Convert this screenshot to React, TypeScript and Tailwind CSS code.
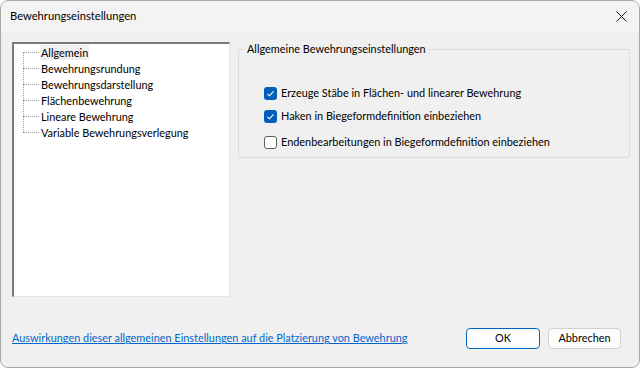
const items = [
  'Allgemein',
  'Bewehrungsrundung',
  'Bewehrungsdarstellung',
  'Flächenbewehrung',
  'Lineare Bewehrung',
  'Variable Bewehrungsverlegung',
]

const checks = [
  { label: 'Erzeuge Stäbe in Flächen- und linearer Bewehrung', on: true, mt: '' },
  { label: 'Haken in Biegeformdefinition einbeziehen', on: true, mt: 'mt-[9px]' },
  { label: 'Endenbearbeitungen in Biegeformdefinition einbeziehen', on: false, mt: 'mt-[12px]' },
]

function Checkbox({ on }: { on: boolean }) {
  if (!on) {
    return <span className="h-[13px] w-[13px] shrink-0 rounded-[3px] border border-[#5f5f5f] bg-white" />
  }
  return (
    <span className="flex h-[13px] w-[13px] shrink-0 items-center justify-center rounded-[3px] bg-[#005fb8]">
      <svg width="9" height="9" viewBox="0 0 9 9" fill="none">
        <path d="M1.5 4.8 L3.5 6.8 L7.5 2.3" stroke="white" strokeWidth="1.1" />
      </svg>
    </span>
  )
}

export default function App() {
  return (
    <div
      className="flex h-[368px] w-[640px] flex-col overflow-hidden rounded-[8px] border border-[#a8a8a8] bg-[#f0f0f0] text-[10.9px] text-black"
      style={{ fontFamily: '"Segoe UI", Lato, sans-serif' }}
    >
      <div className="flex h-[31px] shrink-0 items-center justify-between bg-[#f3f3f3] pl-[9px] pr-[12px]">
        <span className="text-[11.2px]">Bewehrungseinstellungen</span>
        <svg width="11" height="11" viewBox="0 0 11 11">
          <path d="M0.5 0.5 L10.5 10.5 M10.5 0.5 L0.5 10.5" stroke="#1a1a1a" strokeWidth="1" />
        </svg>
      </div>

      <div className="flex flex-1 gap-[8px] pl-[11px] pr-[9px] pt-[10px]">
        <div className="h-[255px] w-[218px] shrink-0 border-l-2 border-t-2 border-r border-b border-l-[#7a7a7a] border-t-[#7a7a7a] border-r-[#e3e3e3] border-b-[#e3e3e3] bg-white">
          <div className="relative ml-[9px] flex flex-col">
            <div className="absolute left-0 top-[8px] h-[80px] border-l border-dotted border-[#a0a0a0]" />
            {items.map((t, i) => (
              <div key={t} className="flex h-[16px] items-center">
                <span className="w-[16px] border-t border-dotted border-[#a0a0a0]" />
                <span className={`ml-[1px] px-[1px] leading-[15px] ${i === 0 ? 'bg-[#f0f0f0]' : ''}`}>{t}</span>
              </div>
            ))}
          </div>
        </div>

        <div className="flex flex-1 flex-col">
          <div className="relative mt-[7px] h-[109px] rounded-[2px] border border-[#dcdcdc]">
            <span className="absolute -top-[9px] left-[6px] bg-[#f0f0f0] px-[2px] leading-[16px]">
              Allgemeine Bewehrungseinstellungen
            </span>
            <div className="flex flex-col pl-[25px] pt-[36px]">
              {checks.map((c) => (
                <div key={c.label} className={`flex h-[14px] items-center gap-[4px] ${c.mt}`}>
                  <Checkbox on={c.on} />
                  <span>{c.label}</span>
                </div>
              ))}
            </div>
          </div>
        </div>
      </div>

      <div className="flex items-center justify-between pb-[18px] pl-[11px] pr-[18px]">
        <span className="text-[#0066cc] underline">
          Auswirkungen dieser allgemeinen Einstellungen auf die Platzierung von Bewehrung
        </span>
        <div className="flex gap-[8px]">
          <button className="h-[21px] w-[74px] rounded-[4px] border border-[#0067c0] bg-[#fdfdfd]">OK</button>
          <button className="h-[21px] w-[73px] rounded-[4px] border border-[#d0d0d0] bg-[#fdfdfd]">Abbrechen</button>
        </div>
      </div>
    </div>
  )
}
